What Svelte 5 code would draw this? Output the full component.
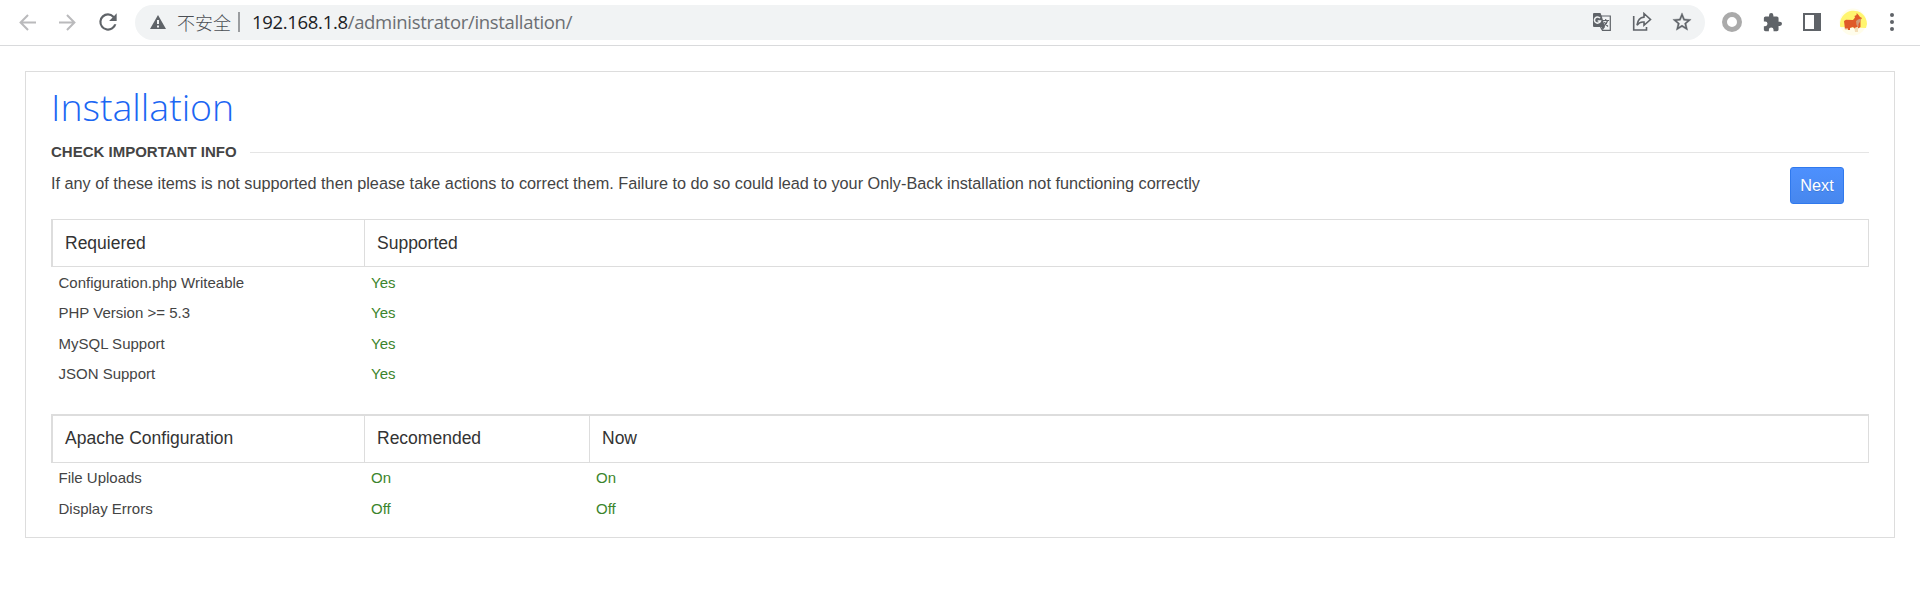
<script>
  const support = ['Configuration.php Writeable', 'PHP Version >= 5.3', 'MySQL Support', 'JSON Support'];
  const apache = [['File Uploads', 'On', 'On'], ['Display Errors', 'Off', 'Off']];
</script>

<div class="toolbar">
  <svg class="back" viewBox="0 0 16 16"><path d="M16 8H1.5M8.5 1L1.5 8L8.5 15" /></svg>
  <svg class="forward" viewBox="0 0 16 16"><path d="M0 8H14.5M7.5 1L14.5 8L7.5 15" /></svg>
  <svg class="reload" viewBox="0 0 24 24"><path d="M17.65 6.35A7.96 7.96 0 0 0 12 4a8 8 0 1 0 7.73 10h-2.08A6 6 0 1 1 12 6c1.66 0 3.14.69 4.22 1.78L13 11h7V4l-2.350 2.350z" /></svg>
  <div class="address">
    <svg class="warn" viewBox="0 0 16 14"><path fill-rule="evenodd" d="M8 0L16 14H0ZM7 5V9H9V5ZM7 10.500V12.500H9V10.500Z" /></svg>
    <span class="insecure">不安全</span>
    <span class="divider"></span>
    <span class="url">192.168.1.8<span>/administrator/installation/</span></span>
    <svg class="translate" viewBox="0 0 20 20">
      <path d="M8 4H18.300V18.300H10.500L8.500 15" fill="none" stroke="#5f6368" stroke-width="1.200" />
      <path d="M2 1H8.500L9.700 4L13 15L10.800 18L9.500 15H2Q1 15 1 14V2Q1 1 2 1Z" fill="#5f6368" />
      <path d="M8 6.100A3.100 3.100 0 1 0 8.500 9H5.700" fill="none" stroke="#f1f3f4" stroke-width="1.500" />
      <path d="M10.500 8.500H17M13.700 7V8.500M15.600 8.500Q14.800 11.500 12 13.700M12.400 10Q13.500 12.500 16 14.500" fill="none" stroke="#5f6368" stroke-width="1.200" />
    </svg>
    <svg class="share" viewBox="0 0 20 20" fill="none" stroke="#5f6368" stroke-width="1.600"><path d="M1.700 4V18H14.500V15" /><path d="M12 1.500L18.500 7.500L12 13.300V10Q7.500 9.500 5 13.200Q6 5.500 12 5.100Z" /></svg>
    <svg class="star" viewBox="0 0 24 24"><path d="M22 9.240l-7.190-.62L12 2 9.190 8.630 2 9.240l5.460 4.730L5.820 21 12 17.270 18.180 21l-1.630-7.030L22 9.240zM12 15.400l-3.760 2.270 1-4.280-3.320-2.880 4.380-.38L12 6.100l1.710 4.040 4.380.38-3.320 2.880 1 4.280L12 15.400z" /></svg>
  </div>
  <span class="ring"></span>
  <svg class="puzzle" viewBox="1 1 22 22"><path d="M20.500 11H19V7c0-1.100-.9-2-2-2h-4V3.500a2.500 2.500 0 0 0-5 0V5H4c-1.100 0-1.990.9-1.990 2v3.800H3.500a2.700 2.700 0 0 1 0 5.400H2V20c0 1.100.9 2 2 2h3.800v-1.500a2.700 2.700 0 0 1 5.400 0V22H17c1.100 0 2-.9 2-2v-4h1.500a2.500 2.500 0 0 0 0-5z" /></svg>
  <span class="panel-icon"></span>
  <svg class="avatar" viewBox="0 0 28 28">
    <circle cx="14" cy="14" r="13.500" fill="#fffdeb" />
    <path d="M1.300 19A13.500 13.500 0 1 1 28 16L27 20Z" fill="#fff56f" />
    <path d="M5 13L7 11.800L14 12L16 9.500L15.500 8L17.500 7L17.700 5L19.500 7L21 9L23 10L21.500 12V19L18 21H16L14 19L11 20V22H6L5.500 17Z" fill="#df5a28" />
    <path d="M19 11.500L22 10.500L21.500 13L19.500 16V19L17.500 17L17 13Z" fill="#d29b78" />
    <path d="M15.500 20L19 18.500V24H16ZM6 20.500H9V22H6Z" fill="#f4dfb9" />
  </svg>
  <span class="menu"><i></i><i></i><i></i></span>
</div>

<main>
  <h1>Installation</h1>
  <div class="legend"><h2>CHECK IMPORTANT INFO</h2><span></span></div>
  <div class="intro">
    <p>If any of these items is not supported then please take actions to correct them. Failure to do so could lead to your Only-Back installation not functioning correctly</p>
    <button>Next</button>
  </div>
  <section class="first">
    <div class="head row"><b>Requiered</b><b>Supported</b></div>
    {#each support as name}
      <div class="row"><span>{name}</span><span class="ok">Yes</span></div>
    {/each}
  </section>
  <section class="second">
    <div class="head row three"><b>Apache Configuration</b><b>Recomended</b><b>Now</b></div>
    {#each apache as item}
      <div class="row three"><span>{item[0]}</span><span class="ok">{item[1]}</span><span class="ok">{item[2]}</span></div>
    {/each}
  </section>
</main>

<style>
  :global(body) { background: #fff; font-family: "Liberation Sans", Arial, sans-serif; color: #444; }
  * { box-sizing: border-box; }
  svg { display: block; flex: none; }
  .toolbar { height: 46px; border-bottom: 1px solid #d9dadc; display: flex; align-items: center; padding: 0 0 1px 19px; }
  .back, .forward { width: 17px; height: 17px; fill: none; stroke: #bababc; stroke-width: 1.900; }
  .forward { margin-left: 23px; }
  .reload { width: 26px; height: 26px; margin-left: 19px; fill: #5f6368; }
  .address { width: 1570px; height: 35px; border-radius: 18px; background: #f1f3f4; margin-left: 14px; display: flex; align-items: center; padding-left: 15px; flex: none; }
  .warn { width: 16px; height: 14px; fill: #5f6368; }
  .insecure { font: 300 18px/34px "Noto Sans CJK SC", sans-serif; color: #4b4f54; margin-left: 11px; width: 54px; white-space: nowrap; }
  .divider { width: 2px; height: 20px; background: #9b9da0; margin-left: 7px; }
  .url { font: 18.500px/34px "Open Sans", sans-serif; color: #202124; margin-left: 12px; width: 340px; white-space: nowrap; letter-spacing: -.32px; }
  .url span { color: #6b6e72; }
  .translate { width: 20px; height: 20px; margin-left: auto; }
  .share { width: 20px; height: 20px; margin-left: 20px; }
  .star { width: 22px; height: 22px; fill: #5f6368; stroke: #5f6368; stroke-width: .4; margin: 0 12px 0 19px; }
  .ring { width: 20px; height: 20px; border: 5px solid #aaa; border-radius: 50%; margin-left: 17px; }
  .puzzle { width: 19px; height: 19px; margin-left: 21px; fill: #5f6368; }
  .panel-icon { width: 18px; height: 18px; border: 2px solid #5f6368; border-right-width: 7px; margin-left: 21px; }
  .avatar { width: 28px; height: 28px; margin-left: 18px; }
  .menu { display: flex; flex-direction: column; gap: 3px; margin-left: 23px; }
  .menu i { width: 4px; height: 4px; border-radius: 50%; background: #5f6368; }
  main { border: 1px solid #ddd; margin: 25px 25px 0; height: 467px; padding: 0 25px; }
  h1 { font: 300 37.500px/52px "Open Sans", sans-serif; color: #1b66f3; margin: 9px 0 0; height: 54px; letter-spacing: -.02px; }
  .legend { height: 34px; display: flex; align-items: center; }
  h2 { margin: 0; font: bold 15px/34px "Liberation Sans", sans-serif; width: 199px; white-space: nowrap; }
  .legend span { height: 1px; flex: 1; background: #e5e5e5; margin-top: 1px; }
  .intro { display: flex; justify-content: space-between; height: 50px; }
  .intro p { margin: 0; font-size: 16.250px; line-height: 28px; white-space: nowrap; }
  button { width: 54px; height: 37px; margin: -2px 25px 0 0; border: 1px solid #3079ed; border-radius: 3px; background: linear-gradient(#4d90fe, #4787ed); font: 16.250px "Liberation Sans", sans-serif; color: #fff; text-shadow: 0 1px rgba(0,0,0,.15); padding: 0; }
  section { font-size: 15px; }
  .row { display: grid; grid-template-columns: 313px 1fr; height: 30.500px; line-height: 31px; }
  .first .row:nth-child(odd) { line-height: 29px; }
  .three { grid-template-columns: 313px 225px 1fr; line-height: 29px; }
  .row span { padding-left: 7.500px; }
  .row .ok { color: #3c852c; padding-left: 7px; }
  .head { height: 48px; border: 1px solid #ddd; border-left-width: 2px; grid-template-columns: 311px 1fr; }
  .first .row.head { line-height: 46px; }
  .head.three { grid-template-columns: 311px 225px 1fr; line-height: 45px; }
  .head b { color: #333; font-size: 17.500px; font-weight: 400; padding-left: 12px; }
  .head b + b { border-left: 1px solid #ddd; }
  .second { margin-top: 25px; }
  .second .head { height: 49px; border-top-width: 2px; }
</style>
